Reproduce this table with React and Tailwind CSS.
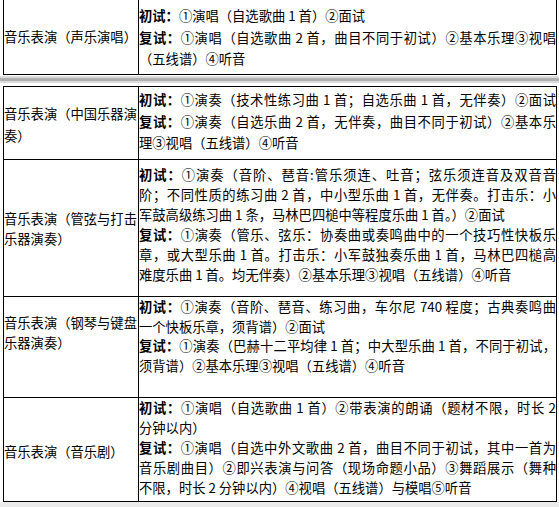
import React from "react";

// j: justify the line to the full cell width (wrapped line in the original)
const firstRow = {
    label: ["音乐表演（声乐演唱）"],
    h: "h-[75px]",
    lead: "leading-[21.5px]",
    padL: "pt-[26px]",
    padR: "pt-[5px]",
    lines: [
        { b: "初试：", t: "①演唱（自选歌曲 1 首）②面试" },
        { b: "复试：", t: "①演唱（自选歌曲 2 首，曲目不同于初试）②基本乐理③视唱", j: true },
        { t: "（五线谱）④听音" },
    ],
};

const rows = [
    {
        label: ["音乐表演（中国乐器演", "奏）"],
        h: "h-[73px]",
        lead: "leading-[21.5px]",
        padL: "pt-[16px]",
        padR: "pt-[2px]",
        lines: [
            { b: "初试：", t: "①演奏（技术性练习曲 1 首；自选乐曲 1 首，无伴奏）②面试", j: true },
            { b: "复试：", t: "①演奏（自选乐曲 2 首，无伴奏，曲目不同于初试）②基本乐", j: true },
            { t: "理③视唱（五线谱）④听音" },
        ],
    },
    {
        label: ["音乐表演（管弦与打击", "乐器演奏）"],
        h: "h-[137px]",
        lead: "leading-[20px]",
        padL: "pt-[49px]",
        padR: "pt-[5px]",
        lines: [
            { b: "初试：", t: "①演奏（音阶、琶音:管乐须连、吐音；弦乐须连音及双音音", j: true },
            { t: "阶；不同性质的练习曲 2 首，中小型乐曲 1 首，无伴奏。打击乐：小", j: true },
            { t: "军鼓高级练习曲 1 条，马林巴四槌中等程度乐曲 1 首。）②面试" },
            { b: "复试：", t: "①演奏（管乐、弦乐：协奏曲或奏鸣曲中的一个技巧性快板乐", j: true },
            { t: "章，或大型乐曲 1 首。打击乐：小军鼓独奏乐曲 1 首，马林巴四槌高", j: true },
            { t: "难度乐曲 1 首。均无伴奏）②基本乐理③视唱（五线谱）④听音" },
        ],
    },
    {
        label: ["音乐表演（钢琴与键盘", "乐器演奏）"],
        h: "h-[101px]",
        lead: "leading-[19.7px]",
        padL: "pt-[16px]",
        padR: "pt-0",
        lines: [
            { b: "初试：", t: "①演奏（音阶、琶音、练习曲，车尔尼 740 程度；古典奏鸣曲", j: true },
            { t: "一个快板乐章，须背谱）②面试" },
            { b: "复试：", t: "①演奏（巴赫十二平均律 1 首；中大型乐曲 1 首，不同于初试，", j: true },
            { t: "须背谱）②基本乐理③视唱（五线谱）④听音" },
        ],
    },
    {
        label: ["音乐表演（音乐剧）"],
        h: "h-[104px]",
        lead: "leading-[20px]",
        padL: "pt-[44px]",
        padR: "pt-0",
        lines: [
            { b: "初试：", t: "①演唱（自选歌曲 1 首）②带表演的朗诵（题材不限，时长 2", j: true },
            { t: "分钟以内）" },
            { b: "复试：", t: "①演唱（自选中外文歌曲 2 首，曲目不同于初试，其中一首为", j: true },
            { t: "音乐剧曲目）②即兴表演与问答（现场命题小品）③舞蹈展示（舞种", j: true },
            { t: "不限，时长 2 分钟以内）④视唱（五线谱）与模唱⑤听音" },
        ],
    },
];

function Row({ row }) {
    return (
        <div className={`flex ${row.h} border-b border-black`}>
            <div className={`w-[135px] shrink-0 border-r border-black ${row.padL} ${row.lead}`}>
                {row.label.map((l) => (
                    <div key={l} className="whitespace-nowrap">{l}</div>
                ))}
            </div>
            <div className={`w-[417px] shrink-0 ${row.padR} ${row.lead}`}>
                {row.lines.map((line, i) => (
                    <div
                        key={i}
                        className={`whitespace-nowrap ${line.j ? "text-justify [text-align-last:justify]" : "text-left"}`}
                    >
                        {line.b && <span className="font-bold">{line.b}</span>}
                        {line.t}
                    </div>
                ))}
            </div>
        </div>
    );
}

export default function App() {
    return (
        <div
            className="w-[559px] h-[507px] bg-white text-black text-[13.3px] overflow-hidden flex flex-col"
            style={{ fontFamily: '"Noto Sans CJK SC", "Noto Sans", sans-serif' }}
        >
            <div className="ml-[3px] w-[554px] border-x border-black">
                <Row row={firstRow} />
            </div>

            {/* split between the two tables */}
            <div className="h-[11px] flex flex-col">
                <div className="h-[1px] bg-white" />
                <div className="h-[2px] bg-[#dcdcdc]" />
                <div className="h-[3px] bg-[#b0b0b0]" />
                <div className="h-[2px] bg-[#dcdcdc]" />
                <div className="flex-1 bg-white" />
            </div>

            <div className="ml-[3px] w-[554px] border-x border-t border-black">
                {rows.map((row, i) => (
                    <Row key={i} row={row} />
                ))}
            </div>

            <div className="flex-1 bg-[#ebebeb]" />
        </div>
    );
}
